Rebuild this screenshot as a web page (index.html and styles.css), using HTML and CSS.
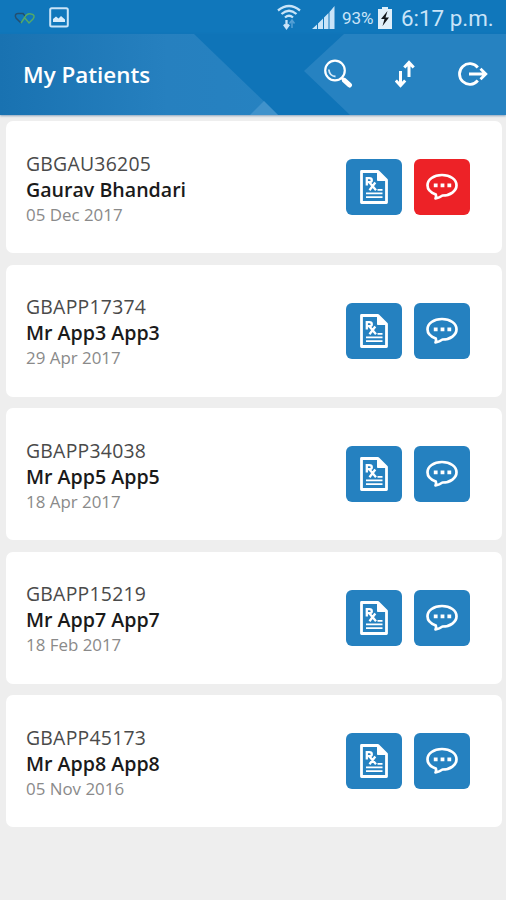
FILE: index.html
```html
<!DOCTYPE html>
<html lang="en">
<head>
  <meta charset="UTF-8">
  <meta name="viewport" content="width=device-width, initial-scale=1.0">
  <title>My Patients</title>
  <link rel="stylesheet" href="styles.css">
</head>
<body>

<svg class="sprite" aria-hidden="true">
  <symbol id="icon-rx" viewBox="0 0 28 34">
    <path d="M1.500 1.500H18L26.500 10V32.500H1.500Z" fill="none" stroke="#fff" stroke-width="2.800" stroke-linejoin="round"/>
    <path d="M17.500 1.500V10.500H26.500Z" fill="#fff" stroke="#fff" stroke-linejoin="round"/>
    <path d="M6.800 15.500V8.200H9.300Q11.800 8.200 11.800 10.200T9.300 12.200H6.800M9.300 12.200L16 20.300M15.300 12.500L9.500 20.300" fill="none" stroke="#fff" stroke-width="2.300"/>
    <path d="M17.500 19.800H22.500M6 23.300H22.500M6 27.200H22.500" stroke="#fff" stroke-width="1.800"/>
  </symbol>
  <symbol id="icon-chat" viewBox="0 0 34 28">
    <path d="M17 2C25.300 2 31.500 6.500 31.500 12.300S25.300 22.500 17.500 22.500Q14.500 24.700 10.500 25.500Q11.500 23.500 10.800 21.500C6 19.800 2.500 16.500 2.500 12.300C2.500 6.500 8.700 2 17 2Z" fill="none" stroke="#fff" stroke-width="2.700" stroke-linejoin="round"/>
    <path d="M8.800 10.500h3.800v3.800h-3.800zM15.600 10.500h3.800v3.800h-3.800zM22.400 10.500h3.800v3.800h-3.800z" fill="#fff"/>
  </symbol>
</svg>

<div class="status-bar">
  <svg class="hearts" width="22" height="14" viewBox="0 0 22 14" fill="none" stroke-width="1.500">
    <path d="M7 11L2 6Q0 2 4 1.500H9L12 5" stroke="#244f70"/>
    <path d="M7 11L11 5Q13 1 17 2Q22 3 19 7L15 11L10 5" stroke="#54a968"/>
  </svg>
  <svg class="picture" width="20" height="21" viewBox="0 0 20 21">
    <rect x="1.200" y="1.200" width="17.600" height="18.300" rx="1.500" fill="none" stroke="#c9e4f8" stroke-width="2"/>
    <path d="M4 15V12L7 9.500L9.500 11.500L12 9L16 12.500V15Z" fill="#d7ecfb"/>
  </svg>
  <span class="spacer"></span>
  <svg class="wifi" width="24" height="26" viewBox="0 0 24 26" fill="none" stroke="#c9e4f8" stroke-width="2.300">
    <path d="M1 6.500Q12-2.500 23 6.500M4.500 10Q12 3.500 19.500 10M8 13.500Q12 10 16 13.500"/>
    <path d="M9.500 16V23M7 20.500L9.500 24L12 20.500"/>
    <path d="M15 24V16M12.500 19.500L15 16L17.500 19.500" stroke="#55a0d5" stroke-width="1.500"/>
  </svg>
  <svg class="signal" width="23" height="23" viewBox="0 0 23 23" fill="#c9e4f8">
    <path d="M0 23L5 18.500V23ZM6 17.500L11 12.500V23H6ZM12 11.500L16.500 7V23H12ZM17.500 6L22.500 0V23H17.500Z"/>
  </svg>
  <span class="battery-text">93%</span>
  <svg class="battery" width="14" height="22" viewBox="0 0 14 22">
    <path d="M4 0H10V2H14V22H0V2H4Z" fill="#e0effa"/>
    <path d="M9.500 4L3 12H6.500L4.500 19L11 10.500H7.500Z" fill="#10151a"/>
  </svg>
  <span class="clock">6:17 p.m.</span>
</div>

<header class="toolbar">
  <svg class="toolbar-bg" width="506" height="81" viewBox="0 0 506 81">
    <defs>
      <linearGradient id="shade" x1="0" x2="1">
        <stop offset="0" stop-color="#1972b1"/>
        <stop offset="0.600" stop-color="#2680bf"/>
        <stop offset="1" stop-color="#2682c1"/>
      </linearGradient>
    </defs>
    <path d="M0 0H194L278 81H0Z" fill="url(#shade)"/>
    <path d="M250 81L264 67L278 81Z" fill="#4092cb"/>
    <path d="M344 0H506V81H350L304 37Z" fill="#2682c1"/>
  </svg>
  <h1>My Patients</h1>
  <svg class="search" width="30" height="30" viewBox="0 0 30 30" fill="none" stroke="#fff">
    <circle cx="12" cy="11.500" r="9.800" stroke-width="2.200"/>
    <path d="M5.800 10.500Q6.500 17 12.500 17.500" stroke-width="1.800" stroke="#d4e9f8"/>
    <path d="M18.500 18.500L21 21" stroke-width="3"/>
    <path d="M21.500 21.500L26.500 26" stroke-width="5" stroke-linecap="round"/>
  </svg>
  <svg class="sort" width="20" height="28" viewBox="0 0 20 28" fill="none" stroke="#fff" stroke-width="3">
    <path d="M5.500 11V25M0.800 20.500L5.500 25.500L10.200 20.500"/>
    <path d="M14 17V3M9.300 7.500L14 2.500L18.700 7.500"/>
  </svg>
  <svg class="logout" width="30" height="26" viewBox="0 0 30 26" fill="none" stroke="#fff" stroke-width="2.800">
    <path d="M19.800 6.500A10.300 10.300 0 1 0 19.800 19.500"/>
    <path d="M11 13H27M22.500 7.700L27.800 13L22.500 18.300"/>
  </svg>
</header>

<main class="patients">
  <article class="card">
    <div class="info">
      <div class="code">GBGAU36205</div>
      <div class="name">Gaurav Bhandari</div>
      <div class="date">05 Dec 2017</div>
    </div>
    <button class="btn"><svg width="28" height="34"><use href="#icon-rx"/></svg></button>
    <button class="btn unread"><svg width="34" height="28"><use href="#icon-chat"/></svg></button>
  </article>
  <article class="card">
    <div class="info">
      <div class="code">GBAPP17374</div>
      <div class="name">Mr App3 App3</div>
      <div class="date">29 Apr 2017</div>
    </div>
    <button class="btn"><svg width="28" height="34"><use href="#icon-rx"/></svg></button>
    <button class="btn"><svg width="34" height="28"><use href="#icon-chat"/></svg></button>
  </article>
  <article class="card">
    <div class="info">
      <div class="code">GBAPP34038</div>
      <div class="name">Mr App5 App5</div>
      <div class="date">18 Apr 2017</div>
    </div>
    <button class="btn"><svg width="28" height="34"><use href="#icon-rx"/></svg></button>
    <button class="btn"><svg width="34" height="28"><use href="#icon-chat"/></svg></button>
  </article>
  <article class="card">
    <div class="info">
      <div class="code">GBAPP15219</div>
      <div class="name">Mr App7 App7</div>
      <div class="date">18 Feb 2017</div>
    </div>
    <button class="btn"><svg width="28" height="34"><use href="#icon-rx"/></svg></button>
    <button class="btn"><svg width="34" height="28"><use href="#icon-chat"/></svg></button>
  </article>
  <article class="card">
    <div class="info">
      <div class="code">GBAPP45173</div>
      <div class="name">Mr App8 App8</div>
      <div class="date">05 Nov 2016</div>
    </div>
    <button class="btn"><svg width="28" height="34"><use href="#icon-rx"/></svg></button>
    <button class="btn"><svg width="34" height="28"><use href="#icon-chat"/></svg></button>
  </article>
</main>

</body>
</html>
```
FILE: styles.css
```css
* {
  box-sizing: border-box;
}

body {
  margin: 0;
  background-color: #eee;
  font-family: 'Open Sans', sans-serif;
  overflow: hidden;
}

svg {
  display: block;
  flex-shrink: 0;
}

.sprite {
  display: none;
}

.status-bar {
  display: flex;
  align-items: center;
  height: 34px;
  padding: 0 13px 0 14px;
  background-color: #1077bb;
  color: #c9e4f8;
  font-family: Roboto, sans-serif;
}

.hearts {
  margin: 4px 13px 0 0;
}

.spacer {
  flex: 1;
}

.wifi {
  margin-right: 11px;
}

.signal {
  margin-right: 7px;
}

.battery-text {
  width: 36px;
  font-size: 17px;
  margin-top: 2px;
}

.battery {
  margin: 2px 9px 0 0;
}

.clock {
  width: 92px;
  font-size: 22.4px;
  white-space: nowrap;
  margin-top: 1px;
}

.toolbar {
  position: relative;
  display: flex;
  align-items: center;
  height: 81px;
  padding: 0 18px 2px 23px;
  background-color: #0f74b8;
  box-shadow: 0 1px 2px rgba(40, 90, 140, 0.5);
}

.toolbar-bg {
  position: absolute;
  top: 0;
  left: 0;
}

.toolbar h1 {
  position: relative;
  flex: 1;
  margin: 0;
  padding-top: 3px;
  color: #fff;
  font-size: 22.4px;
  font-weight: 600;
  line-height: 30px;
}

.search,
.sort,
.logout {
  position: relative;
}

.search {
  margin-right: 42px;
}

.sort {
  margin-right: 43px;
}

.patients {
  display: flex;
  flex-direction: column;
  gap: 11.5px;
  padding: 6px 4.5px 0 6px;
}

.card {
  display: flex;
  align-items: center;
  gap: 12px;
  height: 132px;
  padding: 0 31.5px 0 20px;
  background-color: #fff;
  border-radius: 7px;
}

.info {
  flex: 1;
  padding-top: 1px;
  white-space: nowrap;
}

.code {
  color: #4a4a4a;
  font-size: 19.4px;
  font-weight: 400;
  letter-spacing: 0.25px;
  line-height: 27px;
}

.name {
  color: #1a1a1a;
  font-size: 19.6px;
  font-weight: 600;
  line-height: 26px;
}

.date {
  color: #8a8a8a;
  font-size: 16.9px;
  font-weight: 400;
  line-height: 23px;
}

.btn {
  display: flex;
  align-items: center;
  justify-content: center;
  width: 56px;
  height: 56px;
  padding: 0;
  border: 0;
  border-radius: 6px;
  background-color: #2581c0;
}

.btn.unread {
  background-color: #ed2227;
}
```
